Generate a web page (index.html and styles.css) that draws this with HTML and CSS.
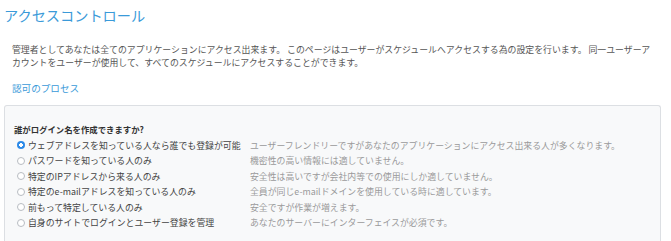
FILE: index.html
```html
<!DOCTYPE html>
<html lang="ja">
<head>
<meta charset="utf-8">
<title>アクセスコントロール</title>
<link rel="stylesheet" href="styles.css">
</head>
<body>
<h1 class="title">アクセスコントロール</h1>
<p class="intro">管理者としてあなたは全てのアプリケーションにアクセス出来ます。 このページはユーザーがスケジュールへアクセスする為の設定を行います。 同一ユーザーアカウントをユーザーが使用して、すべてのスケジュールにアクセスすることができます。</p>
<a class="link" href="#">認可のプロセス</a>
<div class="panel">
  <div class="question">誰がログイン名を作成できますか?</div>
  <div class="options">
    <label class="opt"><span class="radio checked"></span><span class="opt-label">ウェブアドレスを知っている人なら誰でも登録が可能</span></label>
    <span class="opt-desc">ユーザーフレンドリーですがあなたのアプリケーションにアクセス出来る人が多くなります。</span>
    <label class="opt"><span class="radio"></span><span class="opt-label">パスワードを知っている人のみ</span></label>
    <span class="opt-desc">機密性の高い情報には適していません。</span>
    <label class="opt"><span class="radio"></span><span class="opt-label">特定のIPアドレスから来る人のみ</span></label>
    <span class="opt-desc">安全性は高いですが会社内等での使用にしか適していません。</span>
    <label class="opt"><span class="radio"></span><span class="opt-label">特定のe-mailアドレスを知っている人のみ</span></label>
    <span class="opt-desc">全員が同じe-mailドメインを使用している時に適しています。</span>
    <label class="opt"><span class="radio"></span><span class="opt-label">前もって特定している人のみ</span></label>
    <span class="opt-desc">安全ですが作業が増えます。</span>
    <label class="opt"><span class="radio"></span><span class="opt-label">自身のサイトでログインとユーザー登録を管理</span></label>
    <span class="opt-desc">あなたのサーバーにインターフェイスが必須です。</span>
  </div>
</div>
</body>
</html>
```
FILE: styles.css
```css
html, body {
  margin: 0;
  padding: 0;
  background: #ffffff;
  font-family: "Noto Sans CJK JP", "Noto Sans", sans-serif;
}
.title {
  margin: 0;
  padding: 5px 0 0 4px;
  font-size: 14.2px;
  line-height: 20px;
  font-weight: 400;
  color: #3a9ad9;
}
.intro {
  margin: 18px 0 0 0;
  padding: 0 15px 0 12px;
  font-size: 8.9px;
  line-height: 13.3px;
  color: #555555;
}
.link {
  display: block;
  margin: 11px 0 0 12px;
  font-size: 9.6px;
  line-height: 14px;
  color: #3a9ad9;
  text-decoration: none;
}
.panel {
  margin: 10px 10px 0 4px;
  border: 1px solid #dcdfe3;
  border-bottom: none;
  border-radius: 3px 3px 0 0;
  background: #f8f9fa;
  padding: 17px 0 30px 9px;
}
.question {
  font-size: 8.4px;
  line-height: 12px;
  font-weight: 700;
  color: #333333;
}
.options {
  margin-top: 3px;
  display: grid;
  grid-template-columns: 236px auto;
  grid-auto-rows: 15.5px;
  align-items: center;
}
.opt {
  display: flex;
  align-items: center;
  gap: 3px;
  padding-left: 3px;
}
.radio {
  box-sizing: border-box;
  width: 8px;
  height: 8px;
  border-radius: 50%;
  border: 1px solid #b8bcc2;
  background: #ffffff;
  flex: none;
}
.radio.checked {
  border: none;
  background: radial-gradient(circle, #ffffff 0 1.6px, #2d8ae8 2px);
}
.opt-label {
  font-size: 8.9px;
  color: #444444;
  white-space: nowrap;
}
.opt-desc {
  font-size: 8.9px;
  color: #9a9a9a;
  white-space: nowrap;
}
```
